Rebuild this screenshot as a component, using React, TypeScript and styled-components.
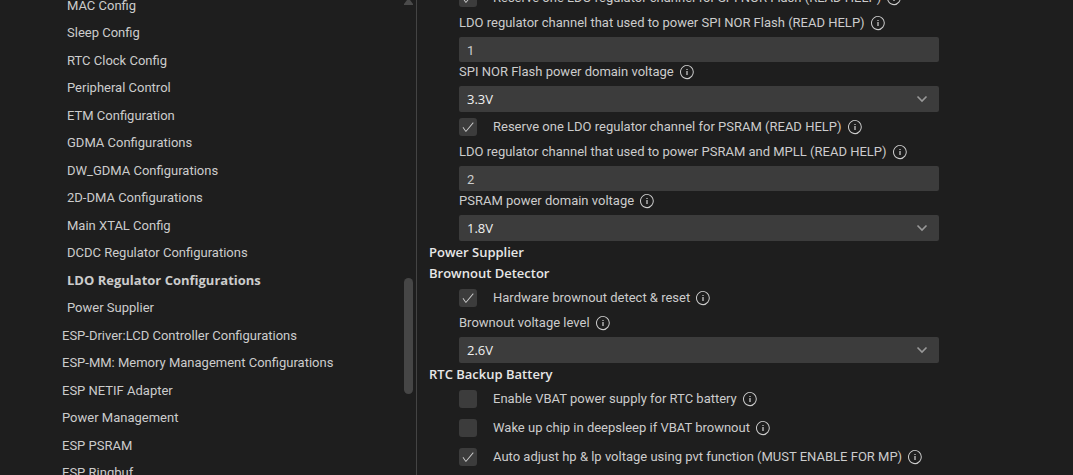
import React, { useId, useState } from "react";
import styled, { createGlobalStyle, css } from "styled-components";
import { VscCheck, VscInfo } from "react-icons/vsc";

const textFont = `"Segoe UI", Roboto, "Noto Sans", sans-serif`;
const strongFont = `"Segoe UI", "Open Sans", "Noto Sans", sans-serif`;

const GlobalStyle = createGlobalStyle`
  * { box-sizing: border-box; }
  body {
    margin: 0;
    background: #1e1e1e;
    color: #cccccc;
    font: 13px/20px ${textFont};
  }
  button, input, select { font: inherit; color: inherit; }
`;

const Page = styled.div`
  display: grid;
  grid-template-columns: minmax(240px, 416px) minmax(0, 1fr);
  height: 100vh;
  overflow: hidden;
`;

const Sidebar = styled.nav`
  display: flex;
  min-height: 0;
  overflow: hidden;
`;

const MenuList = styled.ul`
  flex: 1;
  min-width: 0;
  margin: -8px 0 0;
  padding: 0 0 0 62px;
  list-style: none;
`;

const MenuItem = styled.li<{ $nested: boolean }>`
  height: 27px;
  padding-left: ${(p) => (p.$nested ? 5 : 0)}px;
  &:nth-child(even) { height: 28px; }
`;

const MenuLink = styled.a<{ $active: boolean }>`
  display: block;
  line-height: 27px;
  color: inherit;
  text-decoration: none;
  white-space: nowrap;
  ${(p) => p.$active && css`
    font-family: ${strongFont};
    font-weight: 700;
  `}
`;

const ScrollTrack = styled.div`
  display: flex;
  flex-direction: column;
  align-items: center;
  width: 9px;
  margin-right: 3px;
`;

const ScrollArrow = styled.svg`
  display: block;
  width: 9px;
  height: 5px;
  fill: #4a4a4a;
`;

const ScrollThumb = styled.div`
  width: 9px;
  height: 116px;
  margin-top: 273px;
  border-radius: 5px;
  background: #464646;
`;

const Main = styled.main`
  min-width: 0;
  padding: 0 12px;
  border-left: 1px solid #444444;
  overflow: hidden;
`;

const Settings = styled.div`
  max-width: 510px;
  margin-top: -17px;
`;

const SectionTitle = styled.h2`
  margin: 0;
  padding-top: 2px;
  font-family: ${strongFont};
  font-size: 13px;
  line-height: 19px;
  font-weight: 600;
  color: #e7e7e7;
  white-space: nowrap;
`;

const SectionBody = styled.div`
  padding-left: 30px;
`;

const CheckRow = styled.div`
  display: flex;
  align-items: center;
  height: 29px;
  padding-top: 1px;
  white-space: nowrap;
`;

const Field = styled.div`
  display: flex;
  flex-direction: column;
  ${CheckRow} + & { margin-top: 1px; }
`;

const LabelRow = styled.div`
  display: flex;
  align-items: center;
  height: 20px;
  margin-bottom: 4px;
  white-space: nowrap;
`;

const InfoButton = styled.button`
  display: flex;
  margin: 0 0 0 5px;
  padding: 0;
  border: 0;
  background: none;
  svg { width: 16px; height: 16px; }
`;

const Stack = styled.span`
  display: grid;
  align-items: center;
  > * { grid-area: 1 / 1; }
  > svg { pointer-events: none; }
`;

const CheckStack = styled(Stack)`
  justify-items: center;
  margin-right: 16px;
  > svg { width: 14px; height: 14px; }
`;

const CheckInput = styled.input`
  appearance: none;
  width: 18px;
  height: 18px;
  margin: 0;
  border-radius: 3px;
  background: #3c3c3c;
`;

const TextInput = styled.input`
  width: 100%;
  height: 25px;
  padding: 1px 8px 0;
  border: 0;
  border-radius: 2px;
  background: #3c3c3c;
`;

const SelectInput = styled.select`
  appearance: none;
  width: 100%;
  height: 26px;
  padding: 0 32px 0 8px;
  border: 0;
  border-radius: 2px;
  background: #3c3c3c;
  color: #f0f0f0;
  font-family: ${strongFont};
`;

const Chevron = styled.svg`
  justify-self: end;
  width: 12px;
  height: 8px;
  margin-right: 11px;
  fill: none;
  stroke: #999999;
  stroke-width: 1.6;
`;

const menu = [
  { label: "MAC Config", nested: true },
  { label: "Sleep Config", nested: true },
  { label: "RTC Clock Config", nested: true },
  { label: "Peripheral Control", nested: true },
  { label: "ETM Configuration", nested: true },
  { label: "GDMA Configurations", nested: true },
  { label: "DW_GDMA Configurations", nested: true },
  { label: "2D-DMA Configurations", nested: true },
  { label: "Main XTAL Config", nested: true },
  { label: "DCDC Regulator Configurations", nested: true },
  { label: "LDO Regulator Configurations", nested: true },
  { label: "Power Supplier", nested: true },
  { label: "ESP-Driver:LCD Controller Configurations", nested: false },
  { label: "ESP-MM: Memory Management Configurations", nested: false },
  { label: "ESP NETIF Adapter", nested: false },
  { label: "Power Management", nested: false },
  { label: "ESP PSRAM", nested: false },
  { label: "ESP Ringbuf", nested: false },
];

function Info() {
  return (
    <InfoButton type="button" aria-label="Help">
      <VscInfo />
    </InfoButton>
  );
}

function CheckSetting({ label, initial = false }: { label: string; initial?: boolean }) {
  const id = useId();
  const [checked, setChecked] = useState(initial);
  return (
    <CheckRow>
      <CheckStack>
        <CheckInput id={id} type="checkbox" checked={checked} onChange={(e) => setChecked(e.target.checked)} />
        {checked && <VscCheck />}
      </CheckStack>
      <label htmlFor={id}>{label}</label>
      <Info />
    </CheckRow>
  );
}

function TextSetting({ label, value }: { label: string; value: string }) {
  const id = useId();
  return (
    <Field>
      <LabelRow>
        <label htmlFor={id}>{label}</label>
        <Info />
      </LabelRow>
      <TextInput id={id} type="text" defaultValue={value} />
    </Field>
  );
}

function SelectSetting({ label, value }: { label: string; value: string }) {
  const id = useId();
  return (
    <Field>
      <LabelRow>
        <label htmlFor={id}>{label}</label>
        <Info />
      </LabelRow>
      <Stack>
        <SelectInput id={id} defaultValue={value}>
          <option>{value}</option>
        </SelectInput>
        <Chevron viewBox="0 0 12 8" aria-hidden="true">
          <path d="M1.5 1.5L6 6l4.500-4.500" />
        </Chevron>
      </Stack>
    </Field>
  );
}

export default function App() {
  const [active, setActive] = useState("LDO Regulator Configurations");
  return (
    <Page>
      <GlobalStyle />
      <Sidebar>
        <MenuList>
          {menu.map((item) => (
            <MenuItem key={item.label} $nested={item.nested}>
              <MenuLink href="#" $active={item.label === active} onClick={() => setActive(item.label)}>
                {item.label}
              </MenuLink>
            </MenuItem>
          ))}
        </MenuList>
        <ScrollTrack aria-hidden="true">
          <ScrollArrow viewBox="0 0 9 5">
            <path d="M3 0h3l3 4v1H0V4z" />
          </ScrollArrow>
          <ScrollThumb />
        </ScrollTrack>
      </Sidebar>
      <Main>
        <Settings>
          <SectionBody>
            <CheckSetting label="Reserve one LDO regulator channel for SPI NOR Flash (READ HELP)" initial />
            <TextSetting label="LDO regulator channel that used to power SPI NOR Flash (READ HELP)" value="1" />
            <SelectSetting label="SPI NOR Flash power domain voltage" value="3.3V" />
            <CheckSetting label="Reserve one LDO regulator channel for PSRAM (READ HELP)" initial />
            <TextSetting label="LDO regulator channel that used to power PSRAM and MPLL (READ HELP)" value="2" />
            <SelectSetting label="PSRAM power domain voltage" value="1.8V" />
          </SectionBody>
          <SectionTitle>Power Supplier</SectionTitle>
          <SectionTitle>Brownout Detector</SectionTitle>
          <SectionBody>
            <CheckSetting label="Hardware brownout detect &amp; reset" initial />
            <SelectSetting label="Brownout voltage level" value="2.6V" />
          </SectionBody>
          <SectionTitle>RTC Backup Battery</SectionTitle>
          <SectionBody>
            <CheckSetting label="Enable VBAT power supply for RTC battery" />
            <CheckSetting label="Wake up chip in deepsleep if VBAT brownout" />
            <CheckSetting label="Auto adjust hp &amp; lp voltage using pvt function (MUST ENABLE FOR MP)" initial />
          </SectionBody>
        </Settings>
      </Main>
    </Page>
  );
}
